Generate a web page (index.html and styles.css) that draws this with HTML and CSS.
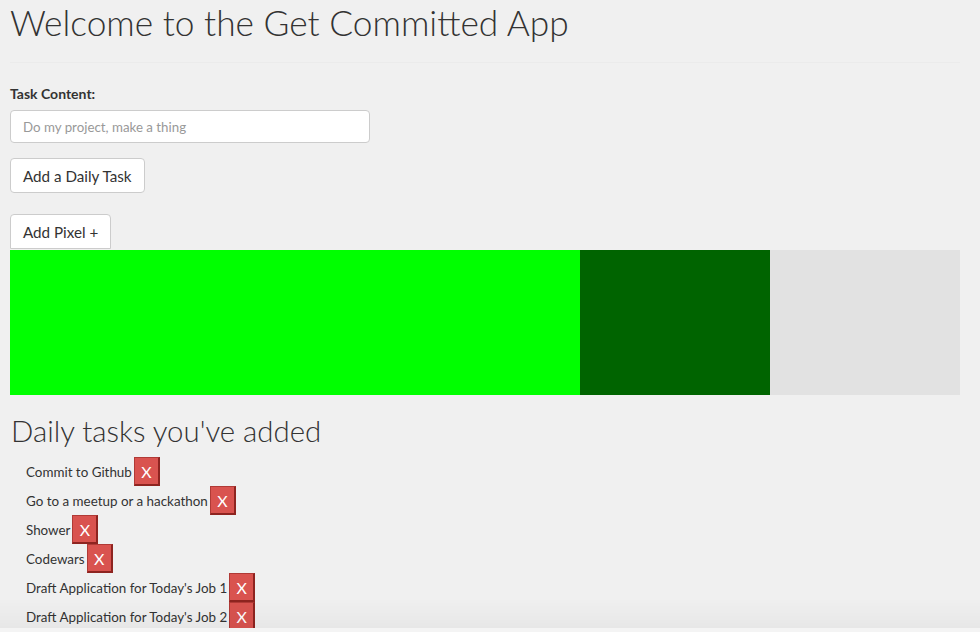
FILE: index.html
```html
<!DOCTYPE html>
<html>
<head>
<meta charset="utf-8">
<link rel="stylesheet" href="styles.css">
</head>
<body>
<div class="page">
  <h1 class="title">Welcome to the Get Committed App</h1>
  <div class="rule"></div>
  <form class="task-form">
    <label class="field-label" for="task">Task Content:</label>
    <input class="field-input" id="task" type="text" placeholder="Do my project, make a thing">
    <button class="btn btn-add" type="button">Add a Daily Task</button>
  </form>
  <button class="btn btn-pixel" type="button">Add Pixel +</button>
  <div class="pixels">
    <div class="pixel pixel-bright"></div>
    <div class="pixel pixel-bright"></div>
    <div class="pixel pixel-bright"></div>
    <div class="pixel pixel-dark"></div>
    <div class="pixel pixel-empty"></div>
  </div>
  <h2 class="subtitle">Daily tasks you've added</h2>
  <ul class="tasks">
    <li class="task">Commit to Github <button class="del" type="button">X</button></li>
    <li class="task">Go to a meetup or a hackathon <button class="del" type="button">X</button></li>
    <li class="task">Shower <button class="del" type="button">X</button></li>
    <li class="task">Codewars <button class="del" type="button">X</button></li>
    <li class="task">Draft Application for Today's Job 1 <button class="del" type="button">X</button></li>
    <li class="task">Draft Application for Today's Job 2 <button class="del" type="button">X</button></li>
  </ul>
</div>
<div class="bottom-shade"></div>
</body>
</html>
```
FILE: styles.css
```css
html, body {
  margin: 0;
  padding: 0;
  background: #f0f0f0;
  overflow: hidden;
}
body {
  font-family: Lato, "Open Sans", sans-serif;
  color: #333;
  font-size: 14px;
}
.page {
  padding: 0 20px 0 10px;
}
.title {
  margin: 0;
  padding-top: 1px;
  font-weight: 300;
  font-size: 35.3px;
  line-height: 44px;
  color: #333;
}
.rule {
  margin-top: 17px;
  height: 1px;
  background: #ebebeb;
}
.task-form {
  display: flex;
  flex-direction: column;
  align-items: flex-start;
  margin: 0;
  padding-top: 21px;
}
.field-label {
  font-weight: 700;
  font-size: 14px;
  line-height: 20px;
  color: #333;
}
.field-input {
  margin-top: 6px;
  box-sizing: border-box;
  width: 360px;
  height: 33px;
  padding: 0 12px;
  border: 1px solid #ccc;
  border-radius: 4px;
  background: #fff;
  font-family: Lato, sans-serif;
  font-size: 13.3px;
  color: #555;
}
.field-input::placeholder {
  color: #999;
}
.btn {
  display: block;
  box-sizing: border-box;
  height: 35px;
  padding: 0 12px;
  border: 1px solid #ccc;
  border-radius: 4px;
  background: #fff;
  font-family: Lato, sans-serif;
  font-size: 15.2px;
  color: #333;
}
.btn-add {
  margin-top: 15px;
}
.btn-pixel {
  margin-top: 21px;
  border-bottom-left-radius: 0;
  border-bottom-right-radius: 0;
}
.pixels {
  display: flex;
  width: 950px;
  height: 145px;
  margin-top: 1px;
}
.pixel {
  flex: 1;
}
.pixel-bright { background: #00ff00; }
.pixel-dark { background: #006400; }
.pixel-empty { background: #e2e2e2; }
.subtitle {
  margin: 18px 0 0 1px;
  font-weight: 300;
  font-size: 29.4px;
  line-height: 36px;
  color: #333;
}
.tasks {
  list-style: none;
  margin: 8px 0 0;
  padding: 0 0 0 16px;
}
.task {
  height: 29px;
  display: flex;
  align-items: center;
  gap: 2px;
  font-size: 13.4px;
  color: #333;
}
.del {
  box-sizing: border-box;
  height: 29px;
  width: 26px;
  padding: 0;
  background: #d9534f;
  color: #fff;
  font-family: Lato, sans-serif;
  font-size: 16px;
  border-style: solid;
  border-width: 1px 2px 2px 1px;
  border-color: #b03a36 #8e2420 #8e2420 #b03a36;
}
.bottom-shade {
  position: fixed;
  left: 0;
  right: 0;
  bottom: 0;
  height: 34px;
  background: linear-gradient(rgba(0,0,0,0), rgba(0,0,0,0.035) 88%, #f4f4f4 89%, #f4f4f4);
  pointer-events: none;
}
```
